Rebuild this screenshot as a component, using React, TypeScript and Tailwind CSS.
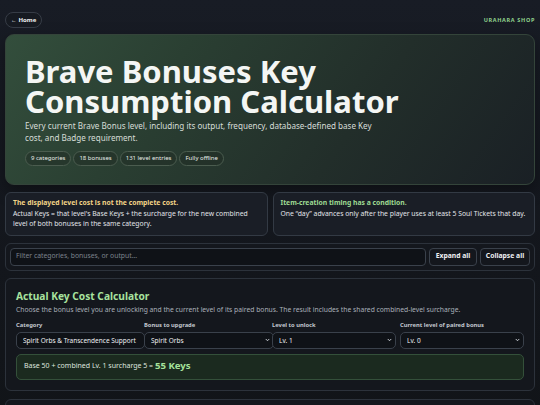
import React from "react";

const pills = ["9 categories", "18 bonuses", "131 level entries", "Fully offline"];

function Chevron() {
  return (
    <svg
      className="pointer-events-none absolute right-[4px] top-1/2 h-[5px] w-[5px] -translate-y-1/2 text-[#d5d9df]"
      viewBox="0 0 10 10"
      fill="none"
      stroke="currentColor"
      strokeWidth="1.8"
      strokeLinecap="round"
      strokeLinejoin="round"
    >
      <path d="M2 3.5 L5 6.5 L8 3.5" />
    </svg>
  );
}

const selectCls =
  "block h-[17px] appearance-none rounded-[5px] border border-[#3a414b] bg-[#0f1217] pl-[6px] text-[6.5px] leading-[15px] text-[#eef0f3] outline-none";

export default function App() {
  return (
    <div
      className="min-h-screen w-full overflow-hidden bg-[linear-gradient(180deg,#181c25_0%,#13161c_60%,#111418_100%)] px-[5px] pt-[12px] text-[#e6e9ee]"
      style={{ fontFamily: '"Noto Sans", "Open Sans", sans-serif' }}
    >
      {/* top bar */}
      <div className="flex h-[16px] items-center justify-between">
        <button className="flex h-[16px] items-center gap-[2px] rounded-full border border-[#363c46] bg-[#161a21] px-[5px] text-[6px] font-bold text-[#f1f3f5]">
          <span className="text-[5.5px] font-normal">←</span>
          <span>Home</span>
        </button>
        <span className="text-[5.5px] font-bold tracking-[0.12em] text-[#8fd18c]">URAHARA SHOP</span>
      </div>

      {/* hero */}
      <section className="mt-[6px] rounded-[9px] border border-[#34443a] bg-[linear-gradient(125deg,#334e3c_0%,#2a3f32_30%,#222e2a_65%,#1a2025_100%)] px-[19px] pb-[18px] pt-[21px] shadow-[0_6px_16px_rgba(0,0,0,0.35)]">
        <h1 className="text-[31px] font-bold leading-[30px] text-[#f4f6f4]">
          Brave Bonuses Key
          <br />
          Consumption Calculator
        </h1>
        <p className="mt-[4px] text-[8.1px] leading-[12px] text-[#d6ddd7]">
          Every current Brave Bonus level, including its output, frequency, database-defined base Key
          <br />
          cost, and Badge requirement.
        </p>
        <div className="mt-[7px] flex gap-[2px]">
          {pills.map((p) => (
            <span
              key={p}
              className="flex h-[15px] items-center rounded-full border border-[#4b5c4f] bg-[#1f2b24]/50 px-[5px] text-[6px] text-[#e8ece8]"
            >
              {p}
            </span>
          ))}
        </div>
      </section>

      {/* notes */}
      <div className="mt-[7px] grid grid-cols-2 gap-[5px]">
        <div className="rounded-[6px] border border-[#333a44] bg-[#1a1e26] px-[7px] pb-[5px] pt-[5px] text-[6.8px] leading-[10.5px]">
          <div className="font-bold text-[#f3d487]">The displayed level cost is not the complete cost.</div>
          <div className="text-[#e2e5ea]">
            Actual Keys = that level's Base Keys + the surcharge for the new combined level of both bonuses in the same category.
          </div>
        </div>
        <div className="rounded-[6px] border border-[#333a44] bg-[#1a1e26] px-[7px] pb-[5px] pt-[5px] text-[6.8px] leading-[10.5px]">
          <div className="font-bold text-[#9edb93]">Item-creation timing has a condition.</div>
          <div className="whitespace-nowrap text-[#e2e5ea]">
            One “day” advances only after the player uses at least 5 Soul Tickets that day.
          </div>
        </div>
      </div>

      {/* filter bar */}
      <div className="mt-[7px] flex items-center gap-[3px] rounded-[6px] border border-[#2c323b] bg-[#14171d] px-[4px] py-[4px]">
        <div className="flex h-[18px] flex-1 items-center rounded-[4px] border border-[#3a414b] bg-[#0f1217] px-[5px] text-[6.8px] text-[#7d848e]">
          Filter categories, bonuses, or output...
        </div>
        <button className="h-[18px] w-[48px] rounded-[4px] border border-[#3a414b] bg-[#14171d] text-[6.8px] font-bold text-[#eef0f3]">
          Expand all
        </button>
        <button className="h-[18px] w-[50px] rounded-[4px] border border-[#3a414b] bg-[#14171d] text-[6.8px] font-bold text-[#eef0f3]">
          Collapse all
        </button>
      </div>

      {/* calculator */}
      <section className="mt-[7px] rounded-[6px] border border-[#2c323b] bg-[#14171d] px-[10px] pb-[10px] pt-[10px]">
        <h2 className="text-[10.2px] font-bold leading-[14px] text-[#a8e29e]">Actual Key Cost Calculator</h2>
        <p className="mt-[2px] text-[6.75px] leading-[10px] text-[#a9b0b9]">
          Choose the bonus level you are unlocking and the current level of its paired bonus. The result includes the shared combined-level surcharge.
        </p>
        <div className="mt-[6px] grid grid-cols-4 gap-[4px]">
          <label className="flex flex-col gap-[3px]">
            <span className="text-[5.8px] font-bold leading-[8px] text-[#c3c8cf]">Category</span>
            <div className="relative w-[129px]">
              <select className={`${selectCls} w-full pr-[2px]`}>
                <option>Spirit Orbs &amp; Transcendence Support</option>
              </select>
            </div>
          </label>
          <label className="flex flex-col gap-[3px]">
            <span className="text-[5.8px] font-bold leading-[8px] text-[#c3c8cf]">Bonus to upgrade</span>
            <div className="relative w-[130px]">
              <select className={`${selectCls} w-full pr-[10px]`}>
                <option>Spirit Orbs</option>
              </select>
              <Chevron />
            </div>
          </label>
          <label className="flex flex-col gap-[3px]">
            <span className="text-[5.8px] font-bold leading-[8px] text-[#c3c8cf]">Level to unlock</span>
            <div className="relative w-full">
              <select className={`${selectCls} w-full pr-[10px]`}>
                <option>Lv. 1</option>
              </select>
              <Chevron />
            </div>
          </label>
          <label className="flex flex-col gap-[3px]">
            <span className="text-[5.8px] font-bold leading-[8px] text-[#c3c8cf]">Current level of paired bonus</span>
            <div className="relative w-full">
              <select className={`${selectCls} w-full pr-[10px]`}>
                <option>Lv. 0</option>
              </select>
              <Chevron />
            </div>
          </label>
        </div>
        <div className="mt-[5px] flex h-[26px] items-center rounded-[5px] border border-[#34503a] bg-[#1b2a1f] px-[7px] text-[7px] text-[#dfe4df]">
          <span>Base 50 + combined Lv. 1 surcharge 5 =&nbsp;</span>
          <span className="text-[9.6px] font-bold text-[#a6e39b]">55 Keys</span>
        </div>
      </section>

      <section className="mt-[8px] h-[40px] rounded-[6px] border border-[#2c323b] bg-[#14171d]" />
    </div>
  );
}
